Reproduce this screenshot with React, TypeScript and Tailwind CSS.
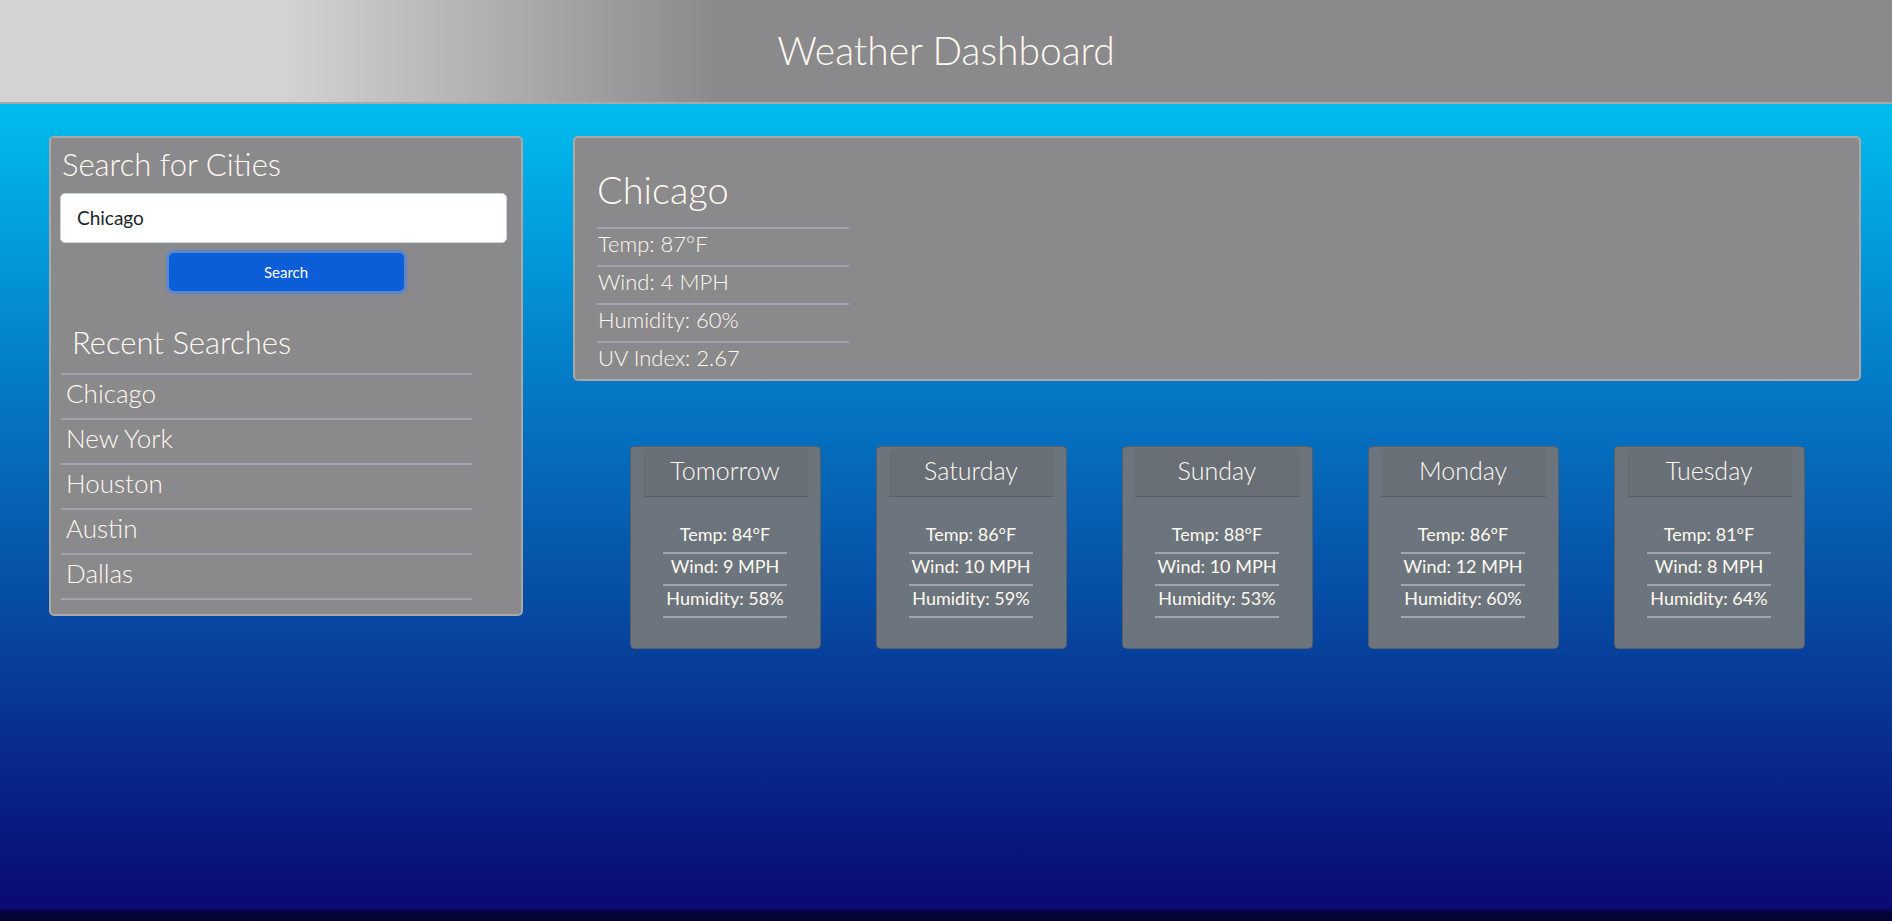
export default function App() {
  const recent = ["Chicago", "New York", "Houston", "Austin", "Dallas"];
  const current = ["Temp: 87°F", "Wind: 4 MPH", "Humidity: 60%", "UV Index: 2.67"];
  const forecast = [
    { day: "Tomorrow", temp: "84", wind: "9", hum: "58" },
    { day: "Saturday", temp: "86", wind: "10", hum: "59" },
    { day: "Sunday", temp: "88", wind: "10", hum: "53" },
    { day: "Monday", temp: "86", wind: "12", hum: "60" },
    { day: "Tuesday", temp: "81", wind: "8", hum: "64" },
  ];
  return (
    <div className="h-[921px] w-full overflow-hidden font-['Lato',sans-serif] text-[#fffaf0] bg-[linear-gradient(180deg,#00bfff_0%,#00bbee_12%,#0479c6_42%,#0747a0_68%,#081d84_88%,#0a0a72_98.6%,#05053c_99%,#030330_100%)]">
      <header className="h-[104px] border-b-2 border-[#a9a9a9] bg-[linear-gradient(to_right,#d3d3d3_15%,#8a898b_38%)] flex items-center justify-center">
        <h1 className="text-[39px] leading-[48px] font-light text-[#fffaf0] pb-[3px]">Weather Dashboard</h1>
      </header>
      <main className="flex items-start gap-[50px] pl-[49px] pr-[31px] pt-[32px]">
        <section className="w-[474px] h-[480px] shrink-0 rounded-[5px] border-2 border-[#a9a9a9] bg-[#8a898b]">
          <h2 className="text-[31px] leading-[36px] font-light pt-[8px] pl-[11px]">Search for Cities</h2>
          <div className="mt-[11px] ml-[9px] w-[447px] h-[50px] rounded-[5px] border border-[#ced4da] bg-white flex items-center pl-[16px] text-[19px] text-[#212529]">
            Chicago
          </div>
          <div className="flex justify-center mt-[10px]">
            <button className="w-[235px] h-[38px] rounded-[5px] bg-[#0b5ed7] ring-[3px] ring-[#5d87c8] text-[15px] text-white">
              Search
            </button>
          </div>
          <h2 className="text-[31px] leading-[37px] font-light pl-[21px] mt-[33px]">Recent Searches</h2>
          <ul className="ml-[10px] w-[411px] mt-[12px] border-b-2 border-[#a7a2b3]">
            {recent.map((c) => (
              <li key={c} className="border-t-2 border-[#a7a2b3] h-[45px] pl-[5px] text-[26px] leading-[34px] pt-[1px] font-light">
                {c}
              </li>
            ))}
          </ul>
        </section>
        <div className="flex-1 flex flex-col">
          <section className="h-[245px] rounded-[5px] border-2 border-[#a9a9a9] bg-[#8a898b] overflow-hidden pl-[22px] pt-[28px]">
            <h2 className="text-[38px] leading-[46px] font-light">Chicago</h2>
            <ul className="w-[252px] mt-[15px] border-b-2 border-[#a7a2b3]">
              {current.map((t) => (
                <li key={t} className="border-t-2 border-[#a7a2b3] h-[38px] text-[22px] leading-[29px] pl-[1px] font-light">
                  {t}
                </li>
              ))}
            </ul>
          </section>
          <div className="flex justify-center gap-[55px] mt-[65px]">
            {forecast.map((f) => (
              <div key={f.day} className="w-[191px] h-[203px] rounded-[5px] border border-[#00000030] bg-[#6c757d] pt-[2px]">
                <div className="mx-[12px] h-[48px] bg-[#686f77] border-b border-[#595f67] text-center text-[25px] leading-[28px] pt-[7px] font-light">
                  {f.day}
                </div>
                <ul className="w-[124px] mx-auto mt-[25px] text-center text-[18px]">
                  {[`Temp: ${f.temp}°F`, `Wind: ${f.wind} MPH`, `Humidity: ${f.hum}%`].map((t) => (
                    <li key={t} className="h-[32px] border-b-2 border-[#a7a2b3] leading-[24px] whitespace-nowrap">
                      {t}
                    </li>
                  ))}
                </ul>
              </div>
            ))}
          </div>
        </div>
      </main>
    </div>
  );
}
